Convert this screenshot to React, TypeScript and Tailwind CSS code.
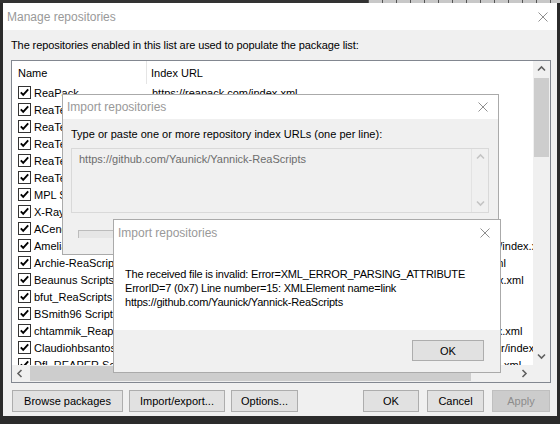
import React from 'react'

const rows: [string, string][] = [
  ['ReaPack', 'https://reapack.com/index.xml'],
  ['ReaTeam Extensions', 'https://github.com/ReaTeam/Extensions/raw/master/index.xml'],
  ['ReaTeam JSFX', 'https://github.com/ReaTeam/JSFX/raw/master/index.xml'],
  ['ReaTeam LangPacks', 'https://github.com/ReaTeam/LangPacks/raw/master/index.xml'],
  ['ReaTeam Scripts', 'https://github.com/ReaTeam/ReaScripts/raw/master/index.xml'],
  ['ReaTeam Themes', 'https://github.com/ReaTeam/Themes/raw/master/index.xml'],
  ['MPL Scripts', 'https://github.com/MichaelPilyavskiy/ReaScripts/raw/master/index.xml'],
  ['X-Raym Scripts', 'https://github.com/X-Raym/REAPER-ReaScripts/raw/master/index.xml'],
  ['ACendan Scripts', 'https://github.com/acendan/reascripts/raw/master/index.xml'],
  ['Amelia ReaScripts', 'https://raw.githubusercontent.com/Amelia_Music/ReaScripts_v2/master/index.xml'],
  ['Archie-ReaScripts', 'https://github.com/Archie-Script/Archie_ReaScripts/raw/master/index.xml'],
  ['Beaunus Scripts', 'https://github.com/beaunus/Beaunus-REAPER-Scripts/raw/master/index.xml'],
  ['bfut_ReaScripts', 'https://github.com/bfut/ReaScripts/raw/main/index.xml'],
  ['BSmith96 Scripts', 'https://github.com/bsmith96/Reaper-Scripts/raw/main/index.xml'],
  ['chtammik_Reaper Scripts', 'https://github.com/chtammik/chtammik_Reaper_Script/raw/master/index.xml'],
  ['Claudiohbsantos Scripts', 'https://github.com/claudiohbsantos/Claudio-hbsantos-Scripts/raw/master/index.xml'],
  ['DfL REAPER Scripts', 'https://github.com/DfL-REAPER/DfL-REAPER-Scripts/raw/master/index.xml'],
]

const CloseX = () => (
  <svg width="10" height="10" viewBox="0 0 10 10" className="block">
    <path d="M0.5 0.5 L9.5 9.5 M9.5 0.5 L0.5 9.5" stroke="#8f8f8f" strokeWidth="1" fill="none" />
  </svg>
)

const Chevron = ({ dir, color = '#606060' }: { dir: 'up' | 'down' | 'left' | 'right'; color?: string }) => {
  const d = {
    up: 'M1 5.5 L4.5 2 L8 5.5',
    down: 'M1 2.5 L4.5 6 L8 2.5',
    left: 'M5.5 1 L2 4.5 L5.5 8',
    right: 'M2.5 1 L6 4.5 L2.5 8',
  }[dir]
  return (
    <svg width="9" height="9" viewBox="0 0 9 9" className="block">
      <path d={d} stroke={color} strokeWidth="1.6" fill="none" />
    </svg>
  )
}

const CheckBox = () => (
  <svg width="13" height="13" viewBox="0 0 13 13" className="block shrink-0">
    <rect x="0.5" y="0.5" width="12" height="12" fill="#fff" stroke="#333" />
    <path d="M2.8 6.3 L5.2 8.8 L10.2 3.4" stroke="#000" strokeWidth="1.9" fill="none" />
  </svg>
)

const Btn = ({ label, w, disabled }: { label: string; w: string; disabled?: boolean }) => (
  <div
    className={`${w} h-[22px] flex items-center justify-center border ${
      disabled ? 'bg-[#cccccc] border-[#bfbfbf] text-[#8c8c8c]' : 'bg-[#e1e1e1] border-[#adadad] text-black'
    }`}
  >
    {label}
  </div>
)

export default function App() {
  return (
    <div className="relative w-[560px] h-[424px] bg-[#2b2b2b] overflow-hidden text-[11px] leading-[14px] font-['Liberation_Sans',Arial,sans-serif]">
      {/* host app strip */}
      <div className="flex h-[3px]">
        <div className="w-[368px] bg-[#333333]" />
        <div className="flex-1 bg-[#c8c8c8] bg-[repeating-linear-gradient(90deg,#555_0_1px,transparent_1px_14px)]" />
      </div>

      {/* Manage repositories */}
      <div className="ml-[3px] w-[554px] h-[413px] flex flex-col">
        <div className="h-[27px] bg-white flex items-center justify-between pl-[4px] pr-[9px]">
          <span className="text-[#999999] text-[12px]">Manage repositories</span>
          <CloseX />
        </div>
        <div className="flex-1 bg-[#f0f0f0] pl-[8px] pr-[6px] pt-[8px] flex flex-col">
          <p className="h-[14px] text-black tracking-[-0.1px]">
            The repositories enabled in this list are used to populate the package list:
          </p>

          <div className="mt-[8px] w-[540px] h-[323px] border border-[#828790] bg-white flex flex-col">
            <div className="flex h-[304px]">
              <div className="flex-1 overflow-hidden">
                <div className="h-[23px] flex items-center text-black">
                  <div className="w-[135px] h-full flex items-center pl-[6px] border-r border-[#e5e5e5]">Name</div>
                  <div className="pl-[4px]">Index URL</div>
                </div>
                {rows.map(([name, url]) => (
                  <div key={name} className="h-[17px] flex items-center whitespace-nowrap text-black">
                    <div className="w-[135px] shrink-0 overflow-hidden flex items-center gap-[3px] pl-[6px]">
                      <CheckBox />
                      <span>{name}</span>
                    </div>
                    <div className="pl-[5px]">{url}</div>
                  </div>
                ))}
              </div>
              <div className="w-[17px] bg-[#f0f0f0] flex flex-col">
                <div className="h-[17px] flex items-center justify-center">
                  <Chevron dir="up" />
                </div>
                <div className="mx-[1px] h-[79px] bg-[#cdcdcd]" />
                <div className="flex-1" />
                <div className="h-[17px] flex items-center justify-center">
                  <Chevron dir="down" />
                </div>
              </div>
            </div>
            <div className="flex h-[17px] bg-[#f0f0f0]">
              <div className="w-[17px] flex items-center justify-center">
                <Chevron dir="left" />
              </div>
              <div className="flex-1 py-[1px] pl-[1px]">
                <div className="w-[441px] h-full bg-[#cdcdcd]" />
              </div>
              <div className="w-[17px] flex items-center justify-center">
                <Chevron dir="right" />
              </div>
              <div className="w-[17px]" />
            </div>
          </div>

          <div className="mt-[7px] flex items-center text-black">
            <div className="ml-[1px] flex gap-[6px]">
              <Btn label="Browse packages" w="w-[111px]" />
              <Btn label="Import/export..." w="w-[96px]" />
              <Btn label="Options..." w="w-[67px]" />
            </div>
            <div className="ml-auto mr-[1px] flex gap-[8px]">
              <Btn label="OK" w="w-[56px]" />
              <Btn label="Cancel" w="w-[57px]" />
              <Btn label="Apply" w="w-[58px]" disabled />
            </div>
          </div>
        </div>
      </div>

      {/* Import repositories (behind) */}
      <div className="absolute left-[62px] top-[94px] w-[437px] h-[161px] border border-[#aaaaaa] bg-[#f0f0f0] flex flex-col">
        <div className="h-[24px] bg-white flex items-center justify-between pl-[4px] pr-[10px]">
          <span className="text-[#999999] text-[12px]">Import repositories</span>
          <CloseX />
        </div>
        <div className="pl-[8px] pt-[8px] flex flex-col">
          <p className="h-[14px] text-black">Type or paste one or more repository index URLs (one per line):</p>
          <div className="mt-[7px] w-[418px] h-[65px] border border-[#d9d9d9] flex">
            <div className="flex-1 pl-[7px] pt-[3px] text-[#6d6d6d]">https://github.com/Yaunick/Yannick-ReaScripts</div>
            <div className="w-[17px] border-l border-[#e3e3e3] flex flex-col justify-between py-[4px] items-center">
              <Chevron dir="up" color="#c4c4c4" />
              <Chevron dir="down" color="#c4c4c4" />
            </div>
          </div>
          <div className="mt-[17px] ml-[7px] w-[120px] h-[8px] border-t border-l border-[#bcbcbc] bg-[#e6e6e6]" />
        </div>
      </div>

      {/* Import repositories error */}
      <div className="absolute left-[113px] top-[219px] w-[388px] h-[154px] border border-[#aaaaaa] bg-white flex flex-col">
        <div className="h-[25px] flex items-center justify-between pl-[4px] pr-[10px]">
          <span className="text-[#999999] text-[12px]">Import repositories</span>
          <CloseX />
        </div>
        <div className="flex-1 pl-[11px] pt-[22px] text-black tracking-[-0.2px]">
          <p>The received file is invalid: Error=XML_ERROR_PARSING_ATTRIBUTE</p>
          <p>ErrorID=7 (0x7) Line number=15: XMLElement name=link</p>
          <p>https://github.com/Yaunick/Yannick-ReaScripts</p>
        </div>
        <div className="h-[42px] bg-[#f0f0f0] flex justify-end pt-[10px] pr-[16px] text-black">
          <div className="w-[72px] h-[21px] flex items-center justify-center bg-[#e1e1e1] border border-[#adadad]">OK</div>
        </div>
      </div>
    </div>
  )
}
